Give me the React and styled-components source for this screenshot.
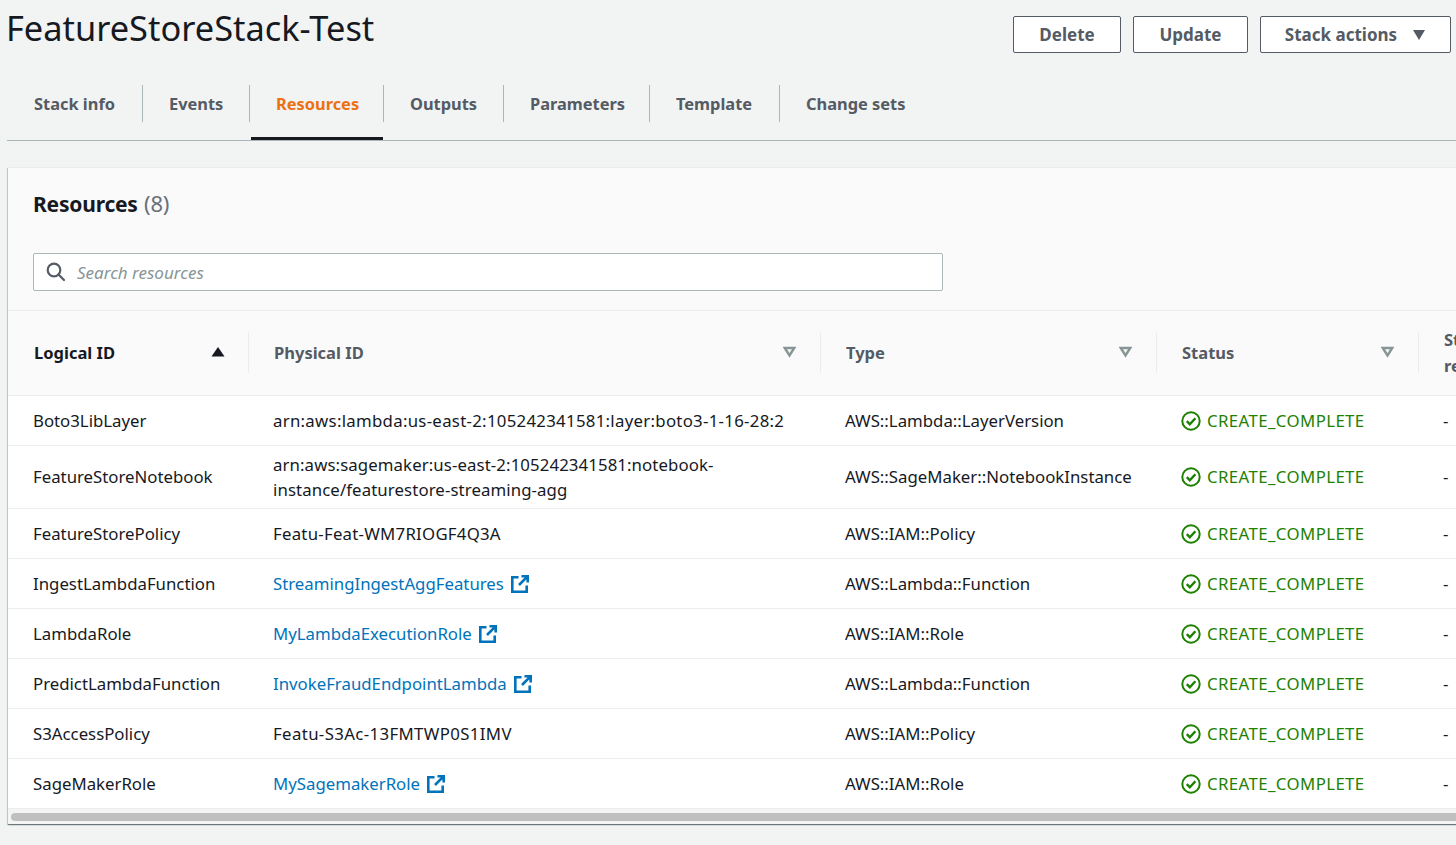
import React from 'react'
import styled, { createGlobalStyle } from 'styled-components'

const Global = createGlobalStyle`
  html, body { margin: 0; padding: 0; height: 845px; overflow: hidden; background: #f2f3f3; }
  body { font-family: "Noto Sans", "Open Sans", "Liberation Sans", sans-serif; color: #16191f; }
`

const Page = styled.div`
  width: 1456px;
  height: 845px;
  padding-left: 7px;
  box-sizing: border-box;
  overflow: hidden;
`
const Header = styled.div`
  display: flex;
  justify-content: space-between;
  align-items: flex-start;
  height: 69px;
`
const Title = styled.h1`
  margin: 7px 0 0 -1px;
  font-size: 34.4px;
  line-height: 42px;
  font-weight: 400;
`
const Actions = styled.div`
  display: flex;
  gap: 12px;
  margin: 16px 5px 0 0;
`
const Button = styled.button`
  height: 37px;
  width: ${p => p.$w}px;
  box-sizing: border-box;
  padding: 0;
  display: flex;
  align-items: center;
  justify-content: center;
  gap: 15px;
  background: #fff;
  border: 1px solid #545b64;
  border-radius: 2px;
  color: #545b64;
  font: 700 17px "Noto Sans", sans-serif;
`
const Tabs = styled.div`
  display: flex;
  height: 71px;
  margin-right: -7px;
  border-bottom: 1px solid #aab7b8;
  box-sizing: content-box;
`
const Tab = styled.div`
  position: relative;
  display: flex;
  align-items: center;
  width: ${p => (p.$w ? `${p.$w}px` : 'auto')};
  height: 71px;
  padding: 0 0 2px 27px;
  box-sizing: border-box;
  font-size: 16.4px;
  font-weight: 700;
  color: ${p => (p.$active ? '#ec7211' : '#545b64')};
  &::before {
    content: '';
    display: ${p => (p.$first ? 'none' : 'block')};
    position: absolute;
    left: 0;
    top: 16px;
    height: 37px;
    width: 1px;
    background: #aab7b8;
  }
  &::after {
    content: '';
    display: ${p => (p.$active ? 'block' : 'none')};
    position: absolute;
    left: 2px;
    right: 0;
    bottom: 0;
    height: 3px;
    background: #16191f;
  }
`
const Card = styled.section`
  margin: 26px -8px 0 1px;
  height: 657px;
  background: #fafafa;
  box-sizing: border-box;
  overflow: hidden;
  box-shadow: 0 1px 1px 0 rgba(0, 28, 36, 0.4), 1px 1px 1px 0 rgba(0, 28, 36, 0.15), -1px 1px 1px 0 rgba(0, 28, 36, 0.15);
  border-top: 1px solid #eaeded;
  width: 1460px;
`
const CardTop = styled.div`
  height: 143px;
  padding: 0 25px;
  border-bottom: 1px solid #eaeded;
  box-sizing: border-box;
`
const CardTitle = styled.h2`
  margin: 0;
  padding-top: 19px;
  font-size: 21px;
  line-height: 32px;
  font-weight: 700;
  letter-spacing: -0.2px;
  span { font-size: 22px; font-weight: 400; color: #687078; margin-left: 1px; }
`
const Search = styled.div`
  margin-top: 33px;
  width: 910px;
  height: 38px;
  box-sizing: border-box;
  display: flex;
  align-items: center;
  gap: 11px;
  padding-left: 12px;
  background: #fff;
  border: 1px solid #aab7b8;
  border-radius: 2px;
  font-size: 17px;
  font-style: italic;
  color: #879596;
`
const Table = styled.table`
  border-collapse: collapse;
  table-layout: fixed;
  width: 1500px;
  background: #fff;
`
const Th = styled.th`
  position: relative;
  height: 84px;
  padding: 0 0 0 26px;
  background: #fafafa;
  border-bottom: 1px solid #eaeded;
  text-align: left;
  font-size: 16.5px;
  line-height: 26px;
  font-weight: 700;
  color: ${p => (p.$sorted ? '#16191f' : '#545b64')};
  box-sizing: border-box;
  &::before {
    content: '';
    display: ${p => (p.$first ? 'none' : 'block')};
    position: absolute;
    left: 0;
    top: 21px;
    height: 41px;
    width: 1px;
    background: #eaeded;
  }
`
const SortIcon = styled.svg`
  position: absolute;
  right: ${p => p.$right}px;
  top: 35px;
`
const Tr = styled.tr`
  height: ${p => p.$h}px;
`
const Td = styled.td`
  padding: 0 10px 0 25px;
  border-bottom: 1px solid #eaeded;
  font-size: 16.8px;
  line-height: 25px;
  letter-spacing: ${p => p.$ls || 0}px;
  color: #16191f;
  box-sizing: border-box;
  vertical-align: middle;
`
const LinkText = styled.a`
  color: #0073bb;
  display: flex;
  align-items: center;
  gap: 7px;
  svg { margin-top: 1px; }
`
const Status = styled.span`
  display: flex;
  align-items: center;
  gap: 6px;
  color: #1d8102;
  letter-spacing: 0.4px;
  white-space: nowrap;
  svg { margin-top: 1px; }
`
const Scrollbar = styled.div`
  height: 15px;
  padding: 4px 0 3px 3px;
  background: #f4f4f4;
  box-sizing: border-box;
`
const Thumb = styled.div`
  height: 8px;
  border-radius: 4px;
  background: #bfbfbf;
`

const SearchIcon = () => (
  <svg width="20" height="20" viewBox="0 0 20 20" fill="none" stroke="#545b64" strokeWidth="2.2">
    <circle cx="8" cy="8" r="6.300" />
    <path d="M12.500 12.500l5.500 5.500" strokeLinecap="round" />
  </svg>
)

const ExternalIcon = () => (
  <svg width="18" height="18" viewBox="0 0 18 18" fill="none" stroke="#0073bb" strokeWidth="2.6">
    <path d="M7.500 2.300H1.300v14.400H15.700V10.500" />
    <path d="M10.500 1.300h6.200v6.200M16.300 1.700L8 10" />
  </svg>
)

const CheckIcon = () => (
  <svg width="20" height="20" viewBox="0 0 20 20" fill="none" stroke="#1d8102" strokeWidth="2">
    <circle cx="10" cy="10" r="8.700" />
    <path d="M5.800 10.200l3 3 5.600-6" strokeWidth="2.400" />
  </svg>
)

const SortDown = () => (
  <SortIcon $right={24} width="13" height="12" viewBox="0 0 13 12" fill="none" stroke="#879596" strokeWidth="2.400">
    <path d="M1.800 2h9.400L6.500 9.500z" />
  </SortIcon>
)

const rows = [
  { id: 'Boto3LibLayer', phys: 'arn:aws:lambda:us-east-2:105242341581:layer:boto3-1-16-28:2', ls: 0.29, type: 'AWS::Lambda::LayerVersion', h: 50 },
  { id: 'FeatureStoreNotebook', phys: 'arn:aws:sagemaker:us-east-2:105242341581:notebook-instance/featurestore-streaming-agg', ls: 0.1, type: 'AWS::SageMaker::NotebookInstance', h: 63 },
  { id: 'FeatureStorePolicy', phys: 'Featu-Feat-WM7RIOGF4Q3A', ls: 0.25, type: 'AWS::IAM::Policy', h: 50 },
  { id: 'IngestLambdaFunction', phys: 'StreamingIngestAggFeatures', link: true, type: 'AWS::Lambda::Function', h: 50 },
  { id: 'LambdaRole', phys: 'MyLambdaExecutionRole', link: true, type: 'AWS::IAM::Role', h: 50 },
  { id: 'PredictLambdaFunction', phys: 'InvokeFraudEndpointLambda', link: true, type: 'AWS::Lambda::Function', h: 50 },
  { id: 'S3AccessPolicy', phys: 'Featu-S3Ac-13FMTWP0S1IMV', ls: 0.37, type: 'AWS::IAM::Policy', h: 50 },
  { id: 'SageMakerRole', phys: 'MySagemakerRole', link: true, type: 'AWS::IAM::Role', h: 50 },
]

const tabs = [
  { name: 'Stack info', w: 135 },
  { name: 'Events', w: 107 },
  { name: 'Resources', w: 134 },
  { name: 'Outputs', w: 120 },
  { name: 'Parameters', w: 146 },
  { name: 'Template', w: 130 },
  { name: 'Change sets' },
]

export default function App() {
  return (
    <Page>
      <Global />
      <Header>
        <Title>FeatureStoreStack-Test</Title>
        <Actions>
          <Button $w={108}>Delete</Button>
          <Button $w={115}>Update</Button>
          <Button $w={191}>
            Stack actions
            <svg width="14" height="10" viewBox="0 0 14 10"><path d="M1 0h12L7 10z" fill="#545b64" /></svg>
          </Button>
        </Actions>
      </Header>
      <Tabs>
        {tabs.map((t, i) => (
          <Tab key={t.name} $w={t.w} $first={i === 0} $active={t.name === 'Resources'}>{t.name}</Tab>
        ))}
      </Tabs>
      <Card>
        <CardTop>
          <CardTitle>Resources <span>(8)</span></CardTitle>
          <Search><SearchIcon />Search resources</Search>
        </CardTop>
        <Table>
          <colgroup>
            <col style={{ width: 240 }} />
            <col style={{ width: 572 }} />
            <col style={{ width: 336 }} />
            <col style={{ width: 262 }} />
            <col style={{ width: 90 }} />
          </colgroup>
          <thead>
            <tr>
              <Th $first $sorted>
                Logical ID
                <SortIcon $right={23} width="14" height="12" viewBox="0 0 14 12"><path d="M7 1l6.500 9.500H.5z" fill="#16191f" /></SortIcon>
              </Th>
              <Th>Physical ID<SortDown /></Th>
              <Th>Type<SortDown /></Th>
              <Th>Status<SortDown /></Th>
              <Th>Status reason</Th>
            </tr>
          </thead>
          <tbody>
            {rows.map(r => (
              <Tr key={r.id} $h={r.h}>
                <Td>{r.id}</Td>
                <Td $ls={r.ls}>
                  {r.link ? <LinkText>{r.phys}<ExternalIcon /></LinkText> : r.phys}
                </Td>
                <Td>{r.type}</Td>
                <Td><Status><CheckIcon />CREATE_COMPLETE</Status></Td>
                <Td>-</Td>
              </Tr>
            ))}
          </tbody>
        </Table>
        <Scrollbar><Thumb /></Scrollbar>
      </Card>
    </Page>
  )
}
